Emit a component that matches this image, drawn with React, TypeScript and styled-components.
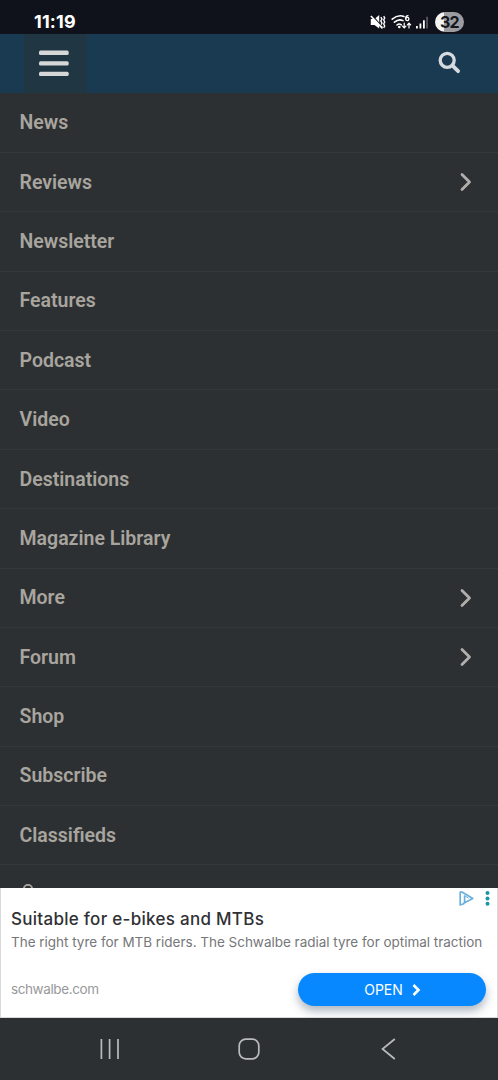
import React from 'react';
import styled, { createGlobalStyle } from 'styled-components';

const Global = createGlobalStyle`
  * { box-sizing: border-box; }
  html, body { margin: 0; padding: 0; background: #2d3032; }
  body { overflow: hidden; font-family: Roboto, 'Liberation Sans', sans-serif; }
  svg { display: block; flex: none; }
`;

const Screen = styled.div`
  width: 498px;
  height: 1080px;
  display: flex;
  flex-direction: column;
  overflow: hidden;
  background: #2d3032;
`;

const StatusBar = styled.div`
  height: 34px;
  flex: none;
  display: flex;
  justify-content: space-between;
  padding: 10px 34px 0;
  background: #10121b;
  color: #fff;
`;

const Clock = styled.span`
  font: 700 18px/24px Inter, sans-serif;
  letter-spacing: 0.15px;
`;

const StatusIcons = styled.div`
  display: flex;
  align-items: center;
  height: 24px;
`;

const Battery = styled.div`
  width: 29px;
  height: 20px;
  margin-left: 6px;
  border-radius: 10px;
  background: linear-gradient(90deg, #f4f4f5 0 9px, #9b9ba0 9px);
  color: #15171f;
  font: 700 16px/20px Inter, sans-serif;
  letter-spacing: -0.7px;
  text-align: center;
`;

const Header = styled.header`
  height: 59px;
  flex: none;
  display: flex;
  justify-content: space-between;
  padding-left: 24px;
  padding-right: 37px;
  background: #1a3a52;
`;

const MenuButton = styled.div`
  width: 63px;
  display: flex;
  padding: 16px 0 0 15px;
  background: #203743;
`;

const SearchButton = styled.div`
  padding-top: 17px;
`;

const Menu = styled.nav`
  height: 795px;
  flex: none;
  overflow: hidden;
  padding-top: 0.7px;
`;

const MenuItem = styled.div`
  height: 59.37px;
  display: flex;
  align-items: center;
  justify-content: space-between;
  padding: 0 25px 0 19.5px;
  border-bottom: 1px solid #34383b;
  color: #a8a59f;
  font-size: 19.5px;
  font-weight: 600;
  white-space: nowrap;
`;

const Ad = styled.section`
  position: relative;
  height: 130px;
  flex: none;
  display: flex;
  flex-direction: column;
  overflow: hidden;
  padding: 19px 11px 0 10px;
  border: 1px solid #d9d9d9;
  border-top: 0;
  background: #fff;
  white-space: nowrap;
  font-family: Inter, sans-serif;
`;

const AdBadges = styled.div`
  position: absolute;
  top: 3px;
  right: 7px;
  display: flex;
  align-items: center;
  gap: 11px;
`;

const AdTitle = styled.div`
  color: #303134;
  font-size: 17px;
  font-weight: 500;
  letter-spacing: 0.28px;
  line-height: 24px;
`;

const AdText = styled.div`
  color: #757779;
  font-size: 13.5px;
  letter-spacing: -0.02px;
  line-height: 22px;
`;

const AdFooter = styled.div`
  display: flex;
  justify-content: space-between;
  align-items: center;
  margin-top: 20px;
`;

const AdDomain = styled.span`
  color: #98999b;
  font-size: 13.5px;
  letter-spacing: -0.4px;
  line-height: 20px;
  padding-bottom: 2px;
`;

const OpenButton = styled.div`
  width: 188px;
  height: 33px;
  display: flex;
  align-items: center;
  justify-content: center;
  gap: 9px;
  padding-left: 1px;
  border-radius: 17px;
  background: #0788ff;
  color: #fff;
  font-size: 14px;
  box-shadow: 0 5px 10px rgba(40, 60, 85, 0.38);
`;

const NavBar = styled.footer`
  height: 62px;
  flex: none;
  display: flex;
  justify-content: space-between;
  padding: 20px 102px 0 99px;
  background: #2d3032;
`;

const items: { label: string; nested?: boolean }[] = [
  { label: 'News' },
  { label: 'Reviews', nested: true },
  { label: 'Newsletter' },
  { label: 'Features' },
  { label: 'Podcast' },
  { label: 'Video' },
  { label: 'Destinations' },
  { label: 'Magazine Library' },
  { label: 'More', nested: true },
  { label: 'Forum', nested: true },
  { label: 'Shop' },
  { label: 'Subscribe' },
  { label: 'Classifieds' },
];

const LastItem = styled.div`
  padding: 19px 22px;
`;

const Chevron = () => (
  <svg width="14" height="20" viewBox="0 0 14 20" fill="none" stroke="#b0afac" strokeWidth="2.8" strokeLinecap="round" strokeLinejoin="round">
    <path d="M3 2.5 10.5 10 3 17.5" />
  </svg>
);

export default function App() {
  return (
    <Screen>
      <Global />
      <StatusBar>
        <Clock>11:19</Clock>
        <StatusIcons>
          <svg width="59" height="18" viewBox="0 0 59 18">
            <path d="M.8 6h3.7L9.2 2v13.6L4.5 12H.8Z" fill="#fff" />
            <path d="M10.8 4.2 12 6l-1.2 2L12 10l-1.2 2 1.2 2.3M13.7 3.2l1 1.8-1 2 1 2-1 2 1 2-1 1.8" fill="none" stroke="#fff" strokeWidth="1.4" />
            <path d="M2.2 2.5 11.5 13.2" stroke="#10121b" strokeWidth="1.4" />
            <path d="M.9 3 12.5 15.4" stroke="#fff" strokeWidth="1.6" />
            <g fill="none" stroke="#fff" strokeWidth="1.6" strokeLinecap="round">
              <path d="M22.2 6.2Q28 1.2 34 3.5M24.4 9.2Q28.8 5.6 33 7.6M27 12q2.2-1.9 4.3-.2" />
              <path d="M38 2.7q-2.4.2-2.4 3" strokeWidth="1.3" />
              <circle cx="37.3" cy="6" r="1.6" strokeWidth="1.3" />
              <path d="M34.2 10v4.8m-1.7-1.7 1.7 1.8 1.7-1.8M39 15v-4.8m-1.6 1.7L39 10.2l1.7 1.7" strokeWidth="1.2" />
            </g>
            <circle cx="29.3" cy="14" r="1.3" fill="#fff" />
            <path d="M46 13v2.5h1.8V13ZM49.5 10.5v5h1.8v-5ZM53 7.2v8.3h1.8V7.2Z" fill="#fff" />
            <path d="M56.3 3.7v11.8h1.5V3.7Z" fill="#65666c" />
          </svg>
          <Battery>32</Battery>
        </StatusIcons>
      </StatusBar>
      <Header>
        <MenuButton>
          <svg width="30" height="27" viewBox="0 0 30 27" fill="#d5d8d7">
            <rect y=".6" width="29.7" height="4.3" rx="1.5" />
            <rect y="11.2" width="29.7" height="4.3" rx="1.5" />
            <rect y="21.8" width="29.7" height="4.3" rx="1.5" />
          </svg>
        </MenuButton>
        <SearchButton>
          <svg width="23" height="23" viewBox="0 0 23 23" fill="none" stroke="#d6dbdf">
            <circle cx="9.2" cy="9.3" r="7" strokeWidth="3.3" />
            <path d="m14.5 14.6 5.6 5.6" strokeWidth="3.8" strokeLinecap="round" />
          </svg>
        </SearchButton>
      </Header>
      <Menu>
        {items.map((item) => (
          <MenuItem key={item.label}>
            <span>{item.label}</span>
            {item.nested && <Chevron />}
          </MenuItem>
        ))}
        <LastItem>
          <svg width="12" height="12" viewBox="0 0 12 12" fill="none" stroke="#a8a59f" strokeWidth="1.8">
            <circle cx="6" cy="5" r="4.2" />
          </svg>
        </LastItem>
      </Menu>
      <Ad>
        <AdBadges>
          <svg width="15" height="15" viewBox="0 0 15 15" fill="none" stroke="#6cb0dc" strokeWidth="1.7" strokeLinejoin="round">
            <path d="M4.8 11.5v1.3L1.2 14V1.2h2.2L13.8 7.4 5.6 11.8V4.6" />
            <path d="M5.6 4.6 9.6 7.2" strokeWidth="1" />
          </svg>
          <svg width="5" height="15" viewBox="0 0 5 15" fill="#1797a5">
            <circle cx="2.5" cy="2" r="2" />
            <circle cx="2.5" cy="7.4" r="2" />
            <circle cx="2.5" cy="12.8" r="2" />
          </svg>
        </AdBadges>
        <AdTitle><span>Suitable for e-bikes and MTBs</span></AdTitle>
        <AdText><span>The right tyre for MTB riders. The Schwalbe radial tyre for optimal traction</span></AdText>
        <AdFooter>
          <AdDomain>schwalbe.com</AdDomain>
          <OpenButton>
            <span>OPEN</span>
            <svg width="9" height="12" viewBox="0 0 9 12" fill="none" stroke="#fff" strokeWidth="2.6">
              <path d="m1.5 1 5 5-5 5" />
            </svg>
          </OpenButton>
        </AdFooter>
      </Ad>
      <NavBar>
        <svg width="22" height="22" viewBox="0 0 22 22" stroke="#b9bbbc" strokeWidth="1.7">
          <path d="M2.4 1v20M10.6 1v20M19 1v20" />
        </svg>
        <svg width="26" height="22" viewBox="0 0 26 22" fill="none" stroke="#b9bbbc" strokeWidth="1.7">
          <rect x="1.2" y="1.2" width="19.6" height="19.6" rx="6.5" />
        </svg>
        <svg width="15" height="22" viewBox="0 0 15 22" fill="none" stroke="#b9bbbc" strokeWidth="1.7">
          <path d="M13.8 1 1.5 11l12.3 10" />
        </svg>
      </NavBar>
    </Screen>
  );
}
